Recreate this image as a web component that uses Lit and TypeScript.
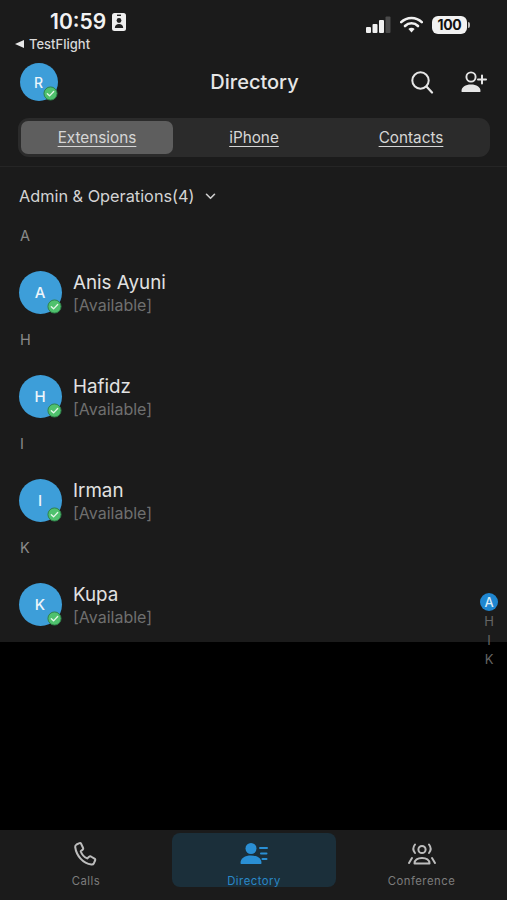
import { LitElement, html, css, svg } from "lit";
import { customElement } from "lit/decorators.js";

const check = svg`<svg class="check" viewBox="0 0 16 16"><circle cx="8" cy="8" r="7" fill="#4fc16d" stroke="#2f7f49" stroke-width="1"/><path d="M4.6 8.2l2.4 2.3 4.4-4.6" fill="none" stroke="#e6f7ea" stroke-width="1.4" stroke-linecap="round" stroke-linejoin="round"/></svg>`;

const contacts = [
  { letter: "A", name: "Anis Ayuni" },
  { letter: "H", name: "Hafidz" },
  { letter: "I", name: "Irman" },
  { letter: "K", name: "Kupa" },
];

@customElement("app-root")
export class AppRoot extends LitElement {
  static styles = css`
    :host { display: flex; flex-direction: column; height: 900px; width: 507px; position: relative; overflow: hidden; background: #000; font-family: Inter, "Liberation Sans", sans-serif; color: #e8e8e8; }
    .panel { height: 642px; background: #1b1b1b; flex: none; }
    .gap { flex: 1; background: #000; }

    .status { height: 58px; display: flex; justify-content: space-between; box-sizing: border-box; padding: 8px 37px 0 15px; }
    .status-left { display: flex; flex-direction: column; }
    .time-row { display: flex; align-items: center; gap: 6px; padding-left: 35px; height: 27px; font-size: 21px; font-weight: 600; color: #f2f2f2; }
    .back { display: flex; align-items: center; gap: 5px; font-size: 13px; font-weight: 500; color: #d8d8d8; height: 18px; }
    .tri { width: 0; height: 0; border-top: 4px solid transparent; border-bottom: 4px solid transparent; border-right: 9px solid #e8e8e8; }
    .status-right { display: flex; align-items: center; gap: 9px; height: 27px; padding-top: 3px; }
    .battery { display: flex; align-items: center; gap: 1px; }
    .batt-body { width: 35px; height: 18px; border-radius: 6px; background: #f2f2f2; color: #111; font-size: 14px; font-weight: 700; display: flex; align-items: center; justify-content: center; letter-spacing: -0.3px; }
    .batt-tip { width: 2px; height: 6px; border-radius: 0 2px 2px 0; background: #bbb; }

    .nav { height: 50px; display: grid; grid-template-columns: 1fr auto 1fr; align-items: center; padding: 0 20px; margin-top: -1px; }
    .nav-title { font-size: 20px; font-weight: 500; color: #e6e6e6; padding-left: 2px; }
    .nav-actions { display: flex; justify-content: flex-end; align-items: center; gap: 26px; }
    .avatar { position: relative; border-radius: 50%; background: #3d9ed9; color: #eef6fb; display: flex; align-items: center; justify-content: center; font-weight: 500; flex: none; padding-right: 1px; box-sizing: border-box; }
    .avatar.sm { width: 38px; height: 38px; font-size: 14px; }
    .avatar.lg { width: 43px; height: 43px; font-size: 15px; }
    .check { position: absolute; width: 15px; height: 15px; right: 0; bottom: 0; }

    .tabs { margin: 11px 17px 0 18px; height: 39px; box-sizing: border-box; padding: 3px; background: #2b2b2b; border-radius: 11px; display: grid; grid-template-columns: repeat(3, 1fr); column-gap: 5px; }
    .tab { display: flex; align-items: center; justify-content: center; font-size: 15.3px; color: #d6d6d6; text-decoration: underline; text-underline-offset: 3px; border-radius: 7px; }
    .tab.active { background: #5e5e5e; }
    .rule { height: 1px; background: #252525; margin-top: 9px; }

    .filter { display: flex; align-items: center; gap: 10px; padding-left: 19px; height: 30px; font-size: 16.3px; color: #d4d4d4; margin-top: 14px; }
    .head { height: 24px; line-height: 24px; padding-left: 20px; font-size: 14.5px; color: #8a8a8a; }
    .first { margin-top: 13px; }
    .row { display: flex; align-items: flex-start; gap: 11px; padding: 23px 0 14px 19px; height: 43px; }
    .info { display: flex; flex-direction: column; }
    .name { font-size: 18.8px; line-height: 23px; color: #e2e2e2; }
    .avail { font-size: 16px; line-height: 22px; color: #6f6f6f; }

    .index { position: absolute; left: 480px; top: 593px; width: 18px; display: flex; flex-direction: column; align-items: center; font-size: 13px; color: #666; }
    .index span { height: 19px; line-height: 19px; }
    .index .on { width: 18px; height: 18px; border-radius: 50%; background: #1f86d0; color: #dcecf7; line-height: 18px; text-align: center; font-size: 13px; font-weight: 500; margin-bottom: 1px; }

    .bar { height: 70px; flex: none; background: #1b1b1b; display: grid; grid-template-columns: 172px 164px 171px; }
    .item { display: flex; flex-direction: column; align-items: center; font-size: 11.3px; letter-spacing: 0.5px; color: #7d7d7d; padding-top: 6px; box-sizing: border-box; height: 54px; margin-top: 3px; border-radius: 8px; }
    .item svg { width: 32px; height: 32px; margin-bottom: 3px; flex: none; }
    .item.active { background: #1b2f3a; color: #2a88c8; }
    .item span { line-height: 14px; }
    .shift { margin-left: -5px; }
  `;

  render() {
    return html`
      <div class="panel">
        <div class="status">
          <div class="status-left">
            <div class="time-row">10:59
              <svg width="14" height="18" viewBox="0 0 14 18"><rect width="14" height="18" rx="2.5" fill="#efefef"/><rect x="5" y="1.6" width="4" height="1.4" fill="#222"/><circle cx="7" cy="7.5" r="2.4" fill="#222"/><path d="M2.8 15c0-2.8 1.8-4 4.2-4s4.2 1.2 4.2 4z" fill="#222"/></svg>
            </div>
            <div class="back"><i class="tri"></i>TestFlight</div>
          </div>
          <div class="status-right">
            <svg width="25" height="17" viewBox="0 0 25 17"><rect x="0" y="11" width="5" height="6" rx="1" fill="#f0f0f0"/><rect x="6.5" y="8" width="5" height="9" rx="1" fill="#f0f0f0"/><rect x="13" y="4" width="5" height="13" rx="1" fill="#f0f0f0"/><rect x="19.5" y="0.5" width="5" height="16.5" rx="1" fill="#4a4a4a"/></svg>
            <svg width="23" height="17" viewBox="0 0 23 17"><path d="M1.2 6.2a14.6 14.6 0 0 1 20.6 0" fill="none" stroke="#f0f0f0" stroke-width="2.6" stroke-linecap="round"/><path d="M5 10a9.2 9.2 0 0 1 13 0" fill="none" stroke="#f0f0f0" stroke-width="2.6" stroke-linecap="round"/><path d="M8.4 13a4.4 4.4 0 0 1 6.2 0L11.5 16.4z" fill="#f0f0f0"/></svg>
            <div class="battery"><div class="batt-body">100</div><div class="batt-tip"></div></div>
          </div>
        </div>

        <div class="nav">
          <div class="avatar sm">R${check}</div>
          <div class="nav-title">Directory</div>
          <div class="nav-actions">
            <svg width="24" height="24" viewBox="0 0 24 24"><circle cx="10.5" cy="10.5" r="8.2" fill="none" stroke="#e6e6e6" stroke-width="2"/><path d="M16.5 16.5l5.5 6" stroke="#e6e6e6" stroke-width="2.2" stroke-linecap="round"/></svg>
            <svg width="27" height="22" viewBox="0 0 27 22"><circle cx="11" cy="6" r="4.6" fill="none" stroke="#e6e6e6" stroke-width="1.9"/><path d="M1.500 20.200c0-4.200 4-6.600 9.500-6.600s9.500 2.400 9.500 6.600c0 .6-.4.9-1 .9H2.500c-.6 0-1-.3-1-.9z" fill="#e6e6e6"/><path d="M18 8.500h8M22 4.500v8" stroke="#e6e6e6" stroke-width="2" stroke-linecap="round"/></svg>
          </div>
        </div>

        <div class="tabs">
          <div class="tab active">Extensions</div>
          <div class="tab">iPhone</div>
          <div class="tab">Contacts</div>
        </div>
        <div class="rule"></div>

        <div class="filter">Admin &amp; Operations(4)
          <svg width="11" height="7" viewBox="0 0 11 7"><path d="M1.500 1.300l4 4 4-4" fill="none" stroke="#cfcfcf" stroke-width="1.600" stroke-linecap="round" stroke-linejoin="round"/></svg>
        </div>

        ${contacts.map((c, i) => html`
          <div class="head ${i === 0 ? "first" : ""}">${c.letter}</div>
          <div class="row">
            <div class="avatar lg">${c.letter}${check}</div>
            <div class="info">
              <div class="name">${c.name}</div>
              <div class="avail">[Available]</div>
            </div>
          </div>
        `)}
      </div>
      <div class="gap"></div>

      <div class="index">
        <span class="on">A</span><span>H</span><span>I</span><span>K</span>
      </div>

      <div class="bar">
        <div class="item">
          <svg class="shift" viewBox="0 0 32 32"><path d="M8.500 5.500l3-1.300c.7-.3 1.300 0 1.600.6l2 4.200c.3.600.1 1.200-.4 1.600l-2 1.600c1 3 3.400 5.800 6.500 7.200l1.900-1.700c.5-.4 1.200-.5 1.800-.2l3.600 2.100c.7.400 1 1.200.6 1.900l-1.200 2.700c-.5 1-1.500 1.500-2.600 1.300C15 24.500 8.300 16.500 7.200 8c-.1-1.100.4-2 1.300-2.500z" fill="none" stroke="#bdbdbd" stroke-width="2" stroke-linejoin="round"/></svg>
          <span>Calls</span>
        </div>
        <div class="item active">
          <svg viewBox="0 0 32 32"><circle cx="13" cy="9.500" r="5.500" fill="#2a8fd4"/><path d="M2.500 24c0-5 4.500-7.500 10.500-7.500S23.500 19 23.500 24c0 .7-.4 1-1 1H3.500c-.6 0-1-.3-1-1z" fill="#2a8fd4"/><path d="M22 9h7M23 14.500h5.500M24.500 20h4" stroke="#2a8fd4" stroke-width="2" stroke-linecap="round"/></svg>
          <span>Directory</span>
        </div>
        <div class="item">
          <svg viewBox="0 0 32 32"><circle cx="16" cy="10.500" r="3.600" fill="none" stroke="#bdbdbd" stroke-width="2"/><path d="M9 5.500c-2 2.500-2 6 0 8.500M23 5.500c2 2.500 2 6 0 8.500" fill="none" stroke="#bdbdbd" stroke-width="2" stroke-linecap="round"/><path d="M8.500 24.500c0-3.500 3.200-5.500 7.500-5.500s7.500 2 7.500 5.500z" fill="none" stroke="#bdbdbd" stroke-width="2" stroke-linejoin="round"/><path d="M6 19l-3 5M26 19l3 5" stroke="#bdbdbd" stroke-width="2" stroke-linecap="round"/></svg>
          <span>Conference</span>
        </div>
      </div>
    `;
  }
}
